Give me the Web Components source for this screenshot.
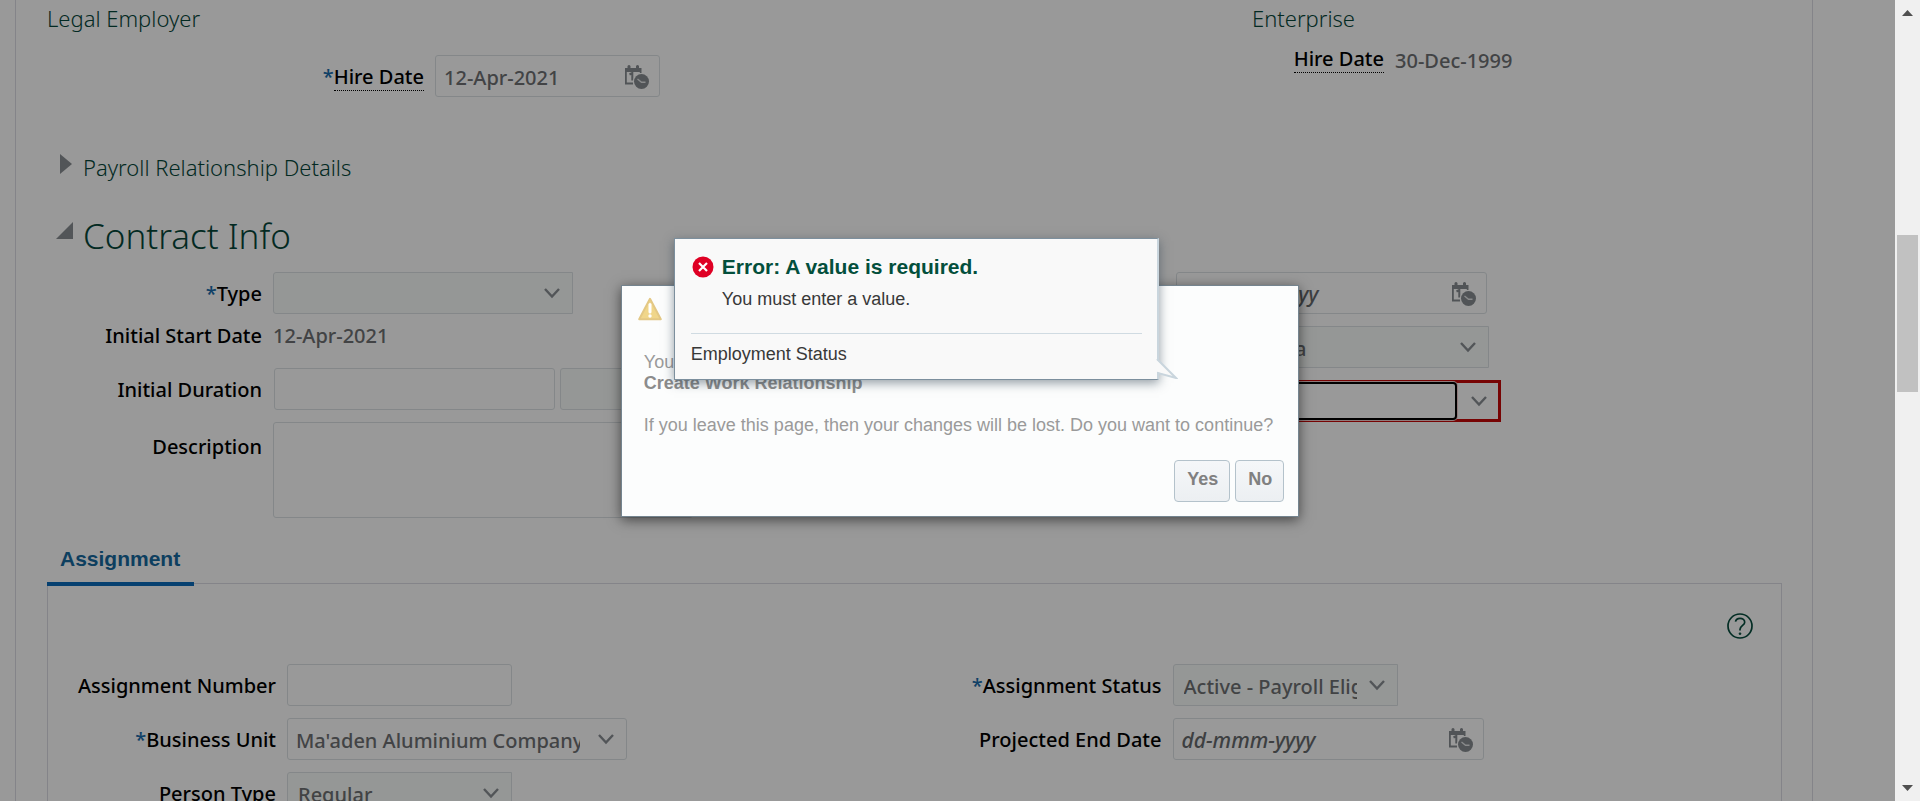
<!DOCTYPE html>
<html lang="en">
<head>
<meta charset="utf-8">
<title>Create Work Relationship</title>
<style>
html, body { margin: 0; height: 100%; overflow: hidden; }
body { background: #fff; font-family: "Noto Sans", "Open Sans", sans-serif; font-size: 20px; }
</style>
</head>
<body>
<work-app></work-app>

<template id="t-app">
<style>
:host { display: flex; position: relative; height: 100vh; overflow: hidden; }
main { flex: 1; min-width: 0; overflow: hidden; }
.sheet { margin: 0 82px 0 15px; padding: 3px 30px 0 31px; border: solid #dcdce4; border-width: 0 1px; }
.cols { display: grid; }
.dates { grid-template-columns: 1205fr 530fr; margin-bottom: 55px; }
.halves { grid-template-columns: 1fr 1fr; align-items: start; }
.stack { display: grid; gap: 12px; min-width: 0; --label-width: 215px; }
.stack.right { --label-width: 250px; }
.loose { gap: 0; }
.loose .start { margin-top: 8px; }
.loose .duration { margin-top: 18px; }
.loose .description { margin-top: 12px; }
tab-panel .stack { --label-width: 228px; }
tab-panel .stack.right { --label-width: 247px; }
.dates section { display: flex; flex-direction: column; }
.hire { margin-top: 22px; --label-width: 377px; }
.enterprise-hire { margin-top: 11px; --label-width: 132px; }
.contract { margin: 30px 0 12px; }
.veil { position: absolute; inset: 0 25px 0 0; background: rgba(0,0,0,.4); }
.layer { position: absolute; inset: 0; display: flex; align-items: center; justify-content: center; }
</style>
<main>
  <div class="sheet">
    <div class="cols dates">
      <section>
        <section-title>Legal Employer</section-title>
        <form-field class="hire" kind="date" label="Hire Date" required hint value="12-Apr-2021" width="225"></form-field>
      </section>
      <section>
        <section-title>Enterprise</section-title>
        <form-field class="enterprise-hire" kind="text" label="Hire Date" hint value="30-Dec-1999"></form-field>
      </section>
    </div>
    <section-title toggle="closed">Payroll Relationship Details</section-title>
    <section-title class="contract" toggle="open" large>Contract Info</section-title>
    <div class="cols halves">
      <div class="stack loose">
        <form-field kind="select" label="Type" required width="300"></form-field>
        <form-field class="start" kind="text" label="Initial Start Date" value="12-Apr-2021"></form-field>
        <form-field class="duration" kind="duration" label="Initial Duration" width="281"></form-field>
        <form-field class="description" kind="area" label="Description" width="420"></form-field>
      </div>
      <div class="stack right">
        <form-field kind="date" label="End Date" placeholder="dd-mmm-yyyy" width="311"></form-field>
        <form-field kind="select" label="Country" value="Saudi Arabia" width="313"></form-field>
        <form-field kind="combo" label="Employment Status" invalid width="325"></form-field>
      </div>
    </div>
    <tab-panel label="Assignment">
      <div class="cols halves">
        <div class="stack">
          <form-field kind="input" label="Assignment Number" width="225"></form-field>
          <form-field kind="combo" label="Business Unit" required value="Ma'aden Aluminium Company" width="340"></form-field>
          <form-field kind="select" label="Person Type" value="Regular" width="225"></form-field>
        </div>
        <div class="stack right">
          <form-field kind="select" label="Assignment Status" required value="Active - Payroll Eligible" width="225"></form-field>
          <form-field kind="date" label="Projected End Date" placeholder="dd-mmm-yyyy" width="311"></form-field>
        </div>
      </div>
    </tab-panel>
  </div>
</main>
<scroll-rail></scroll-rail>
<div class="veil"></div>
<div class="layer">
  <warning-dialog>
    <error-note slot="note" heading="Error: A value is required." message="You must enter a value.">Employment Status</error-note>
  </warning-dialog>
</div>
</template>

<template id="t-title">
<style>
:host { display: flex; color: #06473a; }
h2 { margin: 0; font-size: 22px; line-height: 30px; font-weight: 300; }
:host([large]) h2 { font-size: 35px; line-height: 48px; }
button { display: none; align-self: flex-start; width: 36px; padding: 0; border: 0; background: none; }
:host([toggle]) button { display: block; }
svg { display: block; fill: #898e93; }
.open { display: none; }
:host([toggle="open"]) .open { display: block; }
:host([toggle="open"]) .closed { display: none; }
</style>
<button type="button" aria-label="Toggle section">
  <svg class="closed" width="36" height="24" viewBox="0 0 36 24"><path d="M13 2 L25 12 L13 22Z"/></svg>
  <svg class="open" width="36" height="30" viewBox="0 0 36 30"><path d="M26 10 V27 H9Z"/></svg>
</button>
<h2><slot></slot></h2>
</template>

<template id="t-field">
<style>
:host { display: flex; align-items: center; gap: 11px; }
:host([kind="area"]) { align-items: flex-start; }
.caption { flex: none; display: flex; justify-content: flex-end; width: var(--label-width); color: #000; font-weight: 500; line-height: 26px; padding-top: 3px; white-space: nowrap; box-sizing: border-box; }
:host([kind="area"]) .caption { padding-top: 12px; }
:host([kind="text"]) .caption { padding-top: 0; }
.star { color: #1a6cab; }
label { border-bottom: 1px solid transparent; }
:host([hint]) label { border-bottom: 1px dotted #000; }
.box { position: relative; display: flex; align-items: center; flex: none; box-sizing: border-box; height: 42px; width: var(--w); border: 1px solid #dde2e5; border-radius: 3px; background: #fff; }
input, select, textarea { box-sizing: border-box; width: 100%; height: 100%; min-width: 0; margin: 0; border: 0; border-radius: 3px; outline: 0; background: none; padding: 2px 8px 0; font: 500 20px "Noto Sans", "Open Sans", sans-serif; color: #6e7173; }
input::placeholder { color: #666a6d; font-style: italic; font-size: 21px; opacity: 1; }
textarea { resize: none; }
select { appearance: none; padding: 2px 40px 0 10px; overflow: hidden; }
.select { background: #f8fcfa; border-radius: 3px 0 0 3px; }
.area { height: 96px; }
.pair { display: flex; gap: 5px; margin-left: 1px; }
.icon { flex: none; display: block; padding: 0; border: 0; background: none; }
.date .icon { margin-right: 9px; padding-top: 2px; }
.combo .icon { width: 40px; margin-left: 6px; }
.combo input { padding-right: 0; }
.select .icon { position: absolute; right: 0; width: 40px; pointer-events: none; }
svg { display: block; margin: auto; }
output { line-height: 28px; color: #6e7173; font-weight: 500; }
:host([kind="text"][hint]) output { padding-top: 4px; line-height: 26px; }
:host([invalid]) .box { border: 3px solid #c70808; border-radius: 0; }
:host([invalid]) input { height: 38px; margin: -1px 0 -1px -1px; border: 2px solid #000; border-radius: 4px; background: #fff; box-shadow: 0 0 0 1px #ecc; }
:host([invalid]) .icon { width: 38px; margin-left: 3px; }
</style>
<div class="caption"></div>
</template>

<template id="t-tab">
<style>
:host { display: block; margin-top: 21px; }
.tabs { display: flex; position: relative; margin-bottom: -3px; }
.tabs button { margin: 0; padding: 8px 14px 11px 13px; border: 0; border-bottom: 4px solid #0a6cbb; background: none; color: #16699f; font: 700 21px/24px "Liberation Sans", Arial, sans-serif; }
.panel { border: 1px solid #dcdce4; padding: 29px 0 0; }
.tools { display: flex; justify-content: flex-end; padding: 0 28px 25px 0; }
.tools button { display: block; padding: 0; border: 0; background: none; }
svg { display: block; }
</style>
<div class="tabs" role="tablist"><button type="button" role="tab" aria-selected="true"></button></div>
<div class="panel" role="tabpanel">
  <div class="tools"><button type="button" aria-label="Help">
    <svg width="26" height="26" viewBox="0 0 26 26" fill="none" stroke="#064c3d" stroke-width="1.7"><circle cx="13" cy="13" r="12"/><path d="M8.500 8.600 C9 6.200 11 5.400 13 5.400 C15.700 5.400 17.700 7 17.700 9.200 C17.700 12.300 13.400 12.600 13 16.300 V17.500"/><circle cx="13" cy="20.700" r="1" fill="#064c3d" stroke-width=".6"/></svg>
  </button></div>
  <slot></slot>
</div>
</template>

<template id="t-rail">
<style>
:host { display: flex; flex-direction: column; flex: none; width: 25px; background: #f0f0f0; }
button { display: block; height: 25px; flex: none; padding: 0; border: 0; background: none; }
svg { display: block; fill: #505050; }
.before { flex: 210; }
.thumb { flex: 157; margin: 0 2px; background: #c1c1c1; }
.after { flex: 384; }
</style>
<button type="button" aria-label="Scroll up"><svg width="25" height="25"><path d="M7 16 L12.500 10 L18 16Z"/></svg></button>
<div class="before"></div><div class="thumb"></div><div class="after"></div>
<button type="button" aria-label="Scroll down"><svg width="25" height="25"><path d="M7 9 H18 L12.500 15Z"/></svg></button>
</template>

<template id="t-dialog">
<style>
:host { display: block; position: relative; box-sizing: border-box; padding: 11px 14px 14px 16px; border: 1px solid #74848f; background: #fcfdfd; box-shadow: 0 3px 12px rgba(0,0,0,.55); color: #9a9a9a; font: 18px/21px "Liberation Sans", Arial, sans-serif; }
header { height: 24px; margin-bottom: 31px; }
svg { display: block; }
p { margin: 0 11px 21px 6px; white-space: nowrap; }
p:last-of-type { margin-bottom: 0; }
strong { display: block; color: #8c8c8c; }
footer { display: flex; justify-content: flex-end; gap: 5px; margin-top: 24px; }
button { height: 42px; margin: 0; padding: 0 11px 3px 12px; border: 1px solid #b4c2cb; border-radius: 4px; background: linear-gradient(#f5f7f9, #eceff2); color: #808080; font: 700 18px/21px "Liberation Sans", Arial, sans-serif; }
</style>
<header>
  <svg width="24" height="24" viewBox="0 0 24 24"><path d="M12 1.800 L22.800 22.200 H1.200Z" fill="#f0d68a" stroke="#e3c885" stroke-width="2" stroke-linejoin="round"/><path d="M12 7.500 V15" stroke="#fff" stroke-width="3" stroke-linecap="round"/><circle cx="12" cy="19" r="1.700" fill="#fff"/></svg>
</header>
<p>You have unsaved changes.<strong>Create Work Relationship</strong></p>
<p>If you leave this page, then your changes will be lost. Do you want to continue?</p>
<footer><button type="button">Yes</button><button type="button">No</button></footer>
<slot name="note"></slot>
</template>

<template id="t-note">
<style>
:host { display: block; position: absolute; left: 52px; top: -48px; box-sizing: border-box; width: 485px; padding: 16px 15px 14px 16px; border: 1px solid #7c8f9d; border-right: 2px solid #c9d5dd; background: #f9f9f9; box-shadow: 0 3px 10px rgba(40,60,75,.5); color: #383838; font: 18px/21px "Liberation Sans", Arial, sans-serif; }
.head { display: grid; grid-template-columns: 22px 1fr; column-gap: 8px; align-items: center; padding: 0 0 23px 1px; border-bottom: 1px solid #d0dbe2; }
h2 { margin: 0; color: #034f3c; font-size: 21px; line-height: 24px; }
p { grid-column: 2; margin: 10px 0 0; }
.about { padding-top: 10px; }
.tail { position: absolute; right: -21px; bottom: 0; }
svg { display: block; }
</style>
<div class="head">
  <svg width="22" height="22" viewBox="0 0 22 22"><circle cx="11" cy="11" r="10.500" fill="#df0024"/><path d="M7 7 L15 15 M15 7 L7 15" stroke="#fff" stroke-width="2.200"/></svg>
  <h2></h2>
  <p></p>
</div>
<div class="about"><slot></slot></div>
<svg class="tail" width="22" height="20" viewBox="0 0 22 20"><path d="M1 1 L20 19 L1 13Z" fill="#f9f9f9"/><path d="M1 0 L20 19 L2 14 V20" fill="none" stroke="#c9d5dd" stroke-width="2"/></svg>
</template>

<script>
const stamp = (host, id) => {
  const root = host.attachShadow({ mode: "open" });
  root.append(document.getElementById(id).content.cloneNode(true));
  return root;
};
const CHEVRON = '<svg width="18" height="12" viewBox="0 0 18 12" fill="none" stroke="#898e93" stroke-width="2.4"><path d="M2 2 L9 9.500 L16 2"/></svg>';
const CALENDAR = '<svg width="25" height="25" viewBox="0 0 25 25"><path d="M0 3 H2.500 V1 Q4 -1 5.500 1 V3 H11 V1 Q12.500 -1 14 1 V3 H16.500 V8 H14.800 V7 H1.800 V17.500 H8 V19.500 H0Z" fill="#888d91"/><path d="M4.500 9.500 L7.300 8 V15.500" fill="none" stroke="#888d91" stroke-width="2"/><circle cx="16.500" cy="16.500" r="8.600" fill="#fff"/><circle cx="16.500" cy="16.500" r="7.500" fill="#888d91"/><path d="M12.500 14 L16.500 17.200 H20.500" fill="none" stroke="#e4e6e8" stroke-width="1.400"/></svg>';

customElements.define("section-title", class extends HTMLElement {
  constructor() { super(); stamp(this, "t-title"); }
});

customElements.define("form-field", class extends HTMLElement {
  connectedCallback() {
    if (this.shadowRoot) return;
    const root = stamp(this, "t-field");
    const get = name => this.getAttribute(name) || "";
    const kind = get("kind");
    root.querySelector(".caption").innerHTML =
      (this.hasAttribute("required") ? '<span class="star">*</span>' : "") + '<label for="c"></label>';
    root.querySelector("label").textContent = get("label");
    const body = {
      text: '<output id="c"></output>',
      input: '<div class="box"><input id="c" type="text"></div>',
      date: `<div class="box date"><input id="c" type="text"><button type="button" class="icon" aria-label="Pick a date">${CALENDAR}</button></div>`,
      combo: `<div class="box combo"><input id="c" type="text"><button type="button" class="icon" aria-label="Show list">${CHEVRON}</button></div>`,
      select: `<div class="box select"><select id="c"><option></option></select><span class="icon">${CHEVRON}</span></div>`,
      duration: `<div class="pair"><div class="box"><input id="c" type="text"></div><div class="box select" style="--w:130px"><select aria-label="Duration unit"><option></option></select><span class="icon">${CHEVRON}</span></div></div>`,
      area: '<div class="box area"><textarea id="c"></textarea></div>'
    }[kind];
    const holder = document.createElement("template");
    holder.innerHTML = body;
    root.append(holder.content);
    this.style.setProperty("--w", get("width") + "px");
    const control = root.getElementById("c");
    if (kind === "select") control.options[0].textContent = get("value");
    else control.value = get("value");
    if (get("placeholder")) control.placeholder = get("placeholder");
    if (this.hasAttribute("required")) control.setAttribute("aria-required", "true");
    if (this.hasAttribute("invalid")) control.setAttribute("aria-invalid", "true");
  }
});

customElements.define("tab-panel", class extends HTMLElement {
  connectedCallback() {
    if (this.shadowRoot) return;
    stamp(this, "t-tab").querySelector("[role=tab]").textContent = this.getAttribute("label");
  }
});

customElements.define("scroll-rail", class extends HTMLElement {
  constructor() { super(); stamp(this, "t-rail"); }
});

customElements.define("warning-dialog", class extends HTMLElement {
  constructor() { super(); stamp(this, "t-dialog"); }
  connectedCallback() {
    this.setAttribute("role", "alertdialog");
    this.setAttribute("aria-label", "Warning");
  }
});

customElements.define("error-note", class extends HTMLElement {
  connectedCallback() {
    if (this.shadowRoot) return;
    const root = stamp(this, "t-note");
    root.querySelector("h2").textContent = this.getAttribute("heading");
    root.querySelector("p").textContent = this.getAttribute("message");
  }
});

customElements.define("work-app", class extends HTMLElement {
  constructor() { super(); stamp(this, "t-app"); }
});
</script>
</body>
</html>
